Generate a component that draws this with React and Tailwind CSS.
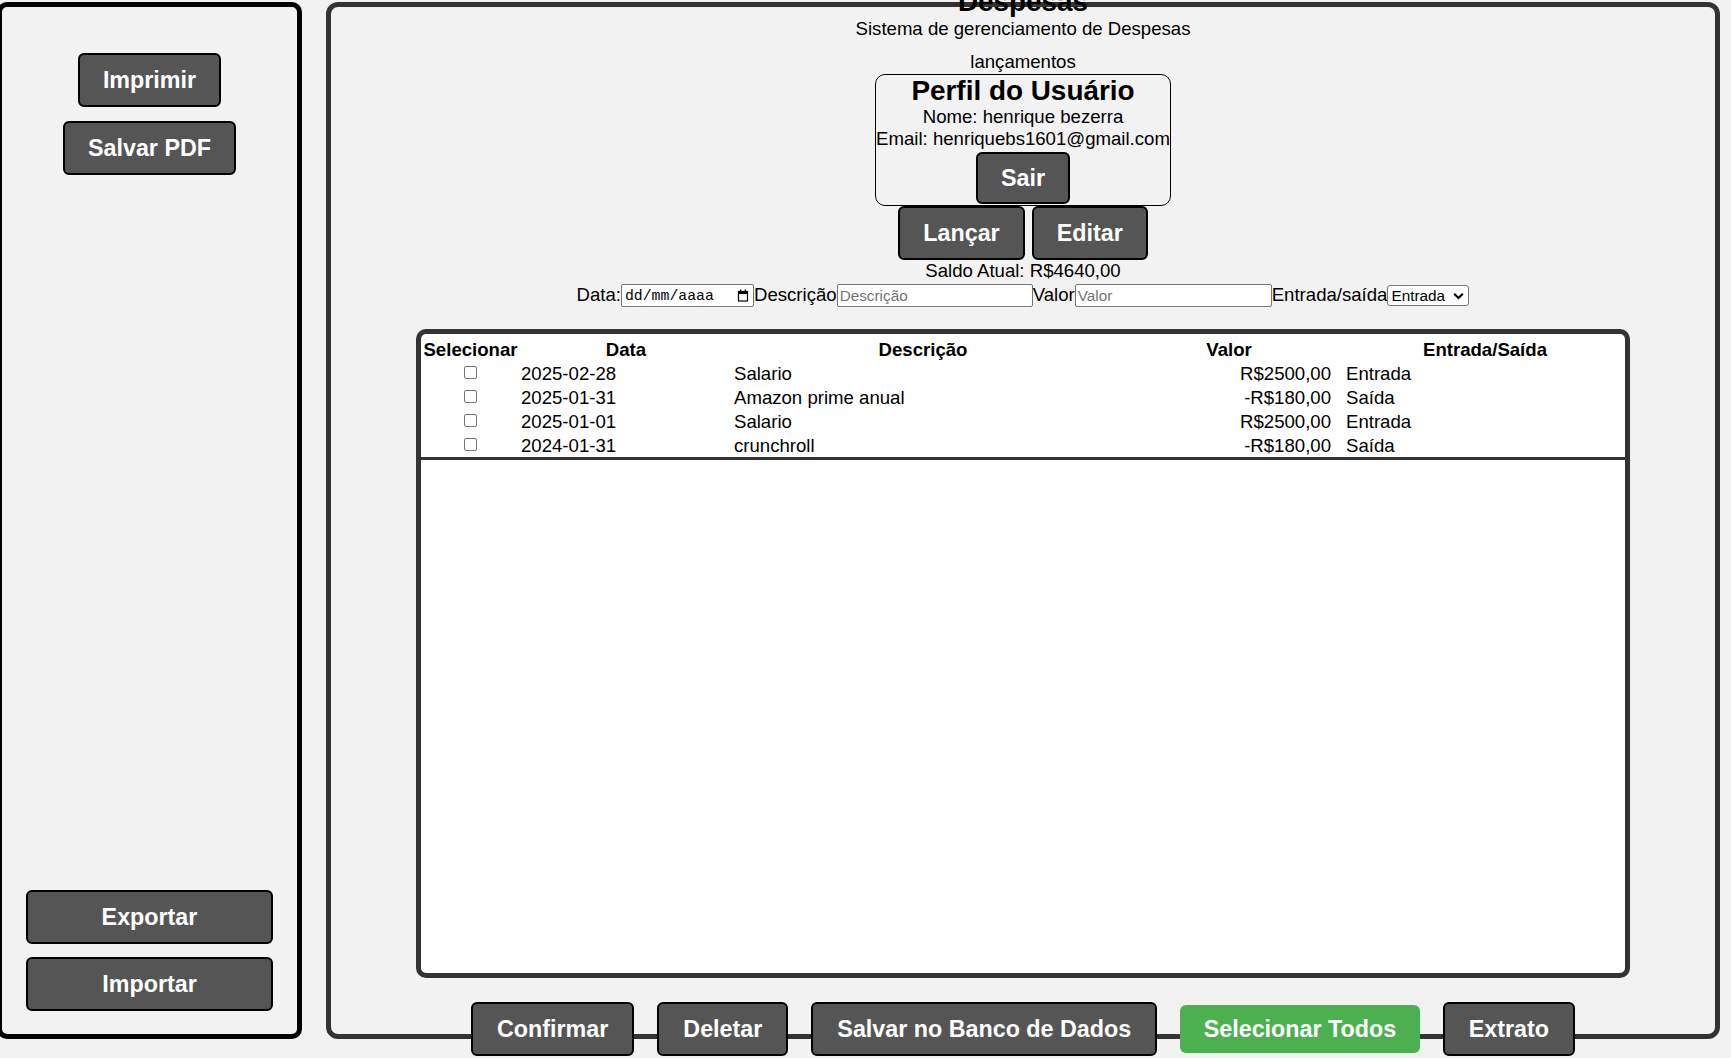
import React from 'react'

const btn =
  'bg-[#555] text-white font-bold text-[23.3px] leading-[28px] px-[23px] py-[11px] border-2 border-black rounded-[6px] whitespace-nowrap'

const rows = [
  { data: '2025-02-28', desc: 'Salario', valor: 'R$2500,00', tipo: 'Entrada' },
  { data: '2025-01-31', desc: 'Amazon prime anual', valor: '-R$180,00', tipo: 'Saída' },
  { data: '2025-01-01', desc: 'Salario', valor: 'R$2500,00', tipo: 'Entrada' },
  { data: '2024-01-31', desc: 'crunchroll', valor: '-R$180,00', tipo: 'Saída' }
]

const CalendarIcon = () => (
  <svg width="12" height="13" viewBox="0 0 12 13" fill="none">
    <rect x="1.5" y="2.5" width="9" height="9.5" stroke="#000" strokeWidth="1.2" />
    <rect x="1.5" y="2.5" width="9" height="2.5" fill="#000" />
    <rect x="3" y="0.5" width="1.3" height="2.5" fill="#000" />
    <rect x="7.7" y="0.5" width="1.3" height="2.5" fill="#000" />
  </svg>
)

const Chevron = () => (
  <svg width="11" height="8" viewBox="0 0 11 8" fill="none">
    <path d="M1.2 1.8 L5.5 6 L9.8 1.8" stroke="#000" strokeWidth="2.2" />
  </svg>
)

const Sidebar = () => (
  <div className="-ml-[3px] w-[305px] h-[1037px] shrink-0 border-[5px] border-black rounded-[10px] bg-[#f2f2f2] flex flex-col justify-between pt-[46px] pb-[23px] px-[24px]">
    <div className="flex flex-col items-center gap-[14px]">
      <button className={btn}>Imprimir</button>
      <button className={btn}>Salvar PDF</button>
    </div>
    <div className="flex flex-col gap-[13px]">
      <button className={btn + ' w-full'}>Exportar</button>
      <button className={btn + ' w-full'}>Importar</button>
    </div>
  </div>
)

const Profile = () => (
  <div className="mt-[2px] w-fit border border-black rounded-[10px] flex flex-col items-center pb-[1px] shrink-0">
    <h2 className="text-[27.9px] font-bold leading-[31px]">Perfil do Usuário</h2>
    <p className="leading-[22px]">Nome: henrique bezerra</p>
    <p className="leading-[22px] whitespace-nowrap">Email: henriquebs1601@gmail.com</p>
    <button className={btn + ' mt-[2px] !py-[10px]'}>Sair</button>
  </div>
)

const FormRow = () => (
  <div className="mt-[1px] flex items-start shrink-0 leading-[21px]">
    <span className="mt-[2px]">Data:</span>
    <div className="mt-[2px] w-[133px] h-[23px] border border-[#767676] rounded-[2px] bg-white flex items-center justify-between pl-[3px] pr-[4px]">
      <span className="font-['Liberation_Mono',monospace] text-[14.8px] leading-none">dd/mm/aaaa</span>
      <CalendarIcon />
    </div>
    <span className="mt-[2px]">Descrição</span>
    <input
      placeholder="Descrição"
      className="mt-[2px] w-[196px] h-[23px] border border-[#767676] rounded-[2px] bg-white px-[2px] text-[15.3px] placeholder:text-[#757575] outline-none"
    />
    <span className="mt-[2px]">Valor</span>
    <input
      placeholder="Valor"
      className="mt-[2px] w-[197px] h-[23px] border border-[#767676] rounded-[2px] bg-white px-[2px] text-[15.3px] placeholder:text-[#757575] outline-none"
    />
    <span className="mt-[2px]">Entrada/saída</span>
    <div className="mt-[3px] w-[82px] h-[21px] border border-[#767676] rounded-[3px] bg-white flex items-center justify-between pl-[3px] pr-[4px] text-[15.3px]">
      <span className="leading-none">Entrada</span>
      <Chevron />
    </div>
  </div>
)

const cols = 'grid grid-cols-[97px_214px_380px_232px_1fr] h-[24px] items-center'

const Table = () => (
  <div className="mt-[22px] w-[1214px] h-[649px] shrink-0 border-[5px] border-[#333] rounded-[10px] bg-white overflow-hidden">
    <div className="pt-[2px] pl-px pb-px border-b-[3px] border-[#333]">
      <div className={cols + ' font-bold text-center'}>
        <span>Selecionar</span>
        <span>Data</span>
        <span>Descrição</span>
        <span>Valor</span>
        <span>Entrada/Saída</span>
      </div>
      {rows.map((el, index) => (
        <div key={index} className={cols}>
          <div className="flex justify-center">
            <div className="w-[13px] h-[13px] -mt-[3px] border border-[#767676] rounded-[2px] bg-white"></div>
          </div>
          <span className="pl-[2px]">{el.data}</span>
          <span className="pl-px">{el.desc}</span>
          <span className="text-right pr-[14px]">{el.valor}</span>
          <span className="pl-px">{el.tipo}</span>
        </div>
      ))}
    </div>
  </div>
)

const bottomBtn = btn + ' !px-[24px]'

const App = () => {
  return (
    <div className="w-full h-[1058px] overflow-hidden bg-[#f2f2f2] text-black font-['Liberation_Sans',Arial,sans-serif] text-[18.6px]">
      <div className="flex pt-[2px]">
        <Sidebar />
        <div className="ml-[24px] w-[1394px] h-[1037px] shrink-0 border-[5px] border-[#333] rounded-[12px] bg-[#f2f2f2] flex flex-col items-center">
          <h1 className="-mt-[19.5px] text-[27.9px] font-bold leading-none shrink-0">Despesas</h1>
          <p className="mt-[3px] leading-[21px] shrink-0">Sistema de gerenciamento de Despesas</p>
          <p className="mt-[12px] leading-[21px] shrink-0">lançamentos</p>
          <Profile />
          <div className="flex gap-[7px] shrink-0">
            <button className={btn}>Lançar</button>
            <button className={btn}>Editar</button>
          </div>
          <p className="leading-[21px] shrink-0">Saldo Atual: R$4640,00</p>
          <FormRow />
          <Table />
          <div className="mt-[24px] flex items-center gap-[23px] shrink-0">
            <button className={bottomBtn}>Confirmar</button>
            <button className={bottomBtn}>Deletar</button>
            <button className={bottomBtn}>Salvar no Banco de Dados</button>
            <button className="bg-[#4caf50] text-white font-bold text-[23.3px] leading-[28px] px-[23.5px] py-[10px] rounded-[6px] whitespace-nowrap">
              Selecionar Todos
            </button>
            <button className={bottomBtn}>Extrato</button>
          </div>
        </div>
      </div>
    </div>
  )
}

export default App
